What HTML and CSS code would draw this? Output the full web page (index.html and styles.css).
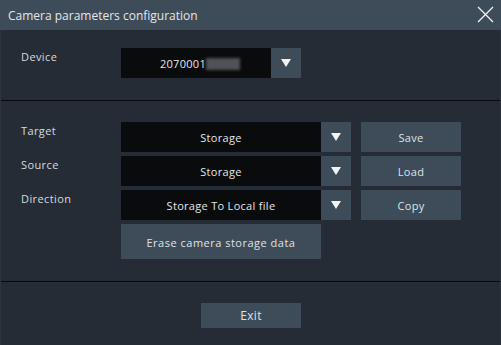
FILE: index.html
```html
<!DOCTYPE html>
<html>
<head>
<meta charset="utf-8">
<link rel="stylesheet" href="styles.css">
</head>
<body>
<div class="window">
  <div class="titlebar">
    <span class="title">Camera parameters configuration</span>
    <svg class="close" width="17" height="17" viewBox="0 0 17 17"><path d="M1 1 L16 16 M16 1 L1 16" stroke="#f2f4f6" stroke-width="1.3" fill="none"/></svg>
  </div>
  <div class="section top">
    <div class="row">
      <span class="label">Device</span>
      <div class="select device">
        <span class="value">2070001<span class="blur"></span></span>
        <span class="arrow"><svg width="10" height="8" viewBox="0 0 10 8"><path d="M0 0 H10 L5 8 Z" fill="#f3f3f3"/></svg></span>
      </div>
    </div>
  </div>
  <div class="sep"></div>
  <div class="section mid">
    <div class="row">
      <span class="label">Target</span>
      <div class="select">
        <span class="value">Storage</span>
        <span class="arrow"><svg width="10" height="8" viewBox="0 0 10 8"><path d="M0 0 H10 L5 8 Z" fill="#f3f3f3"/></svg></span>
      </div>
      <button class="btn side">Save</button>
    </div>
    <div class="row">
      <span class="label">Source</span>
      <div class="select">
        <span class="value">Storage</span>
        <span class="arrow"><svg width="10" height="8" viewBox="0 0 10 8"><path d="M0 0 H10 L5 8 Z" fill="#f3f3f3"/></svg></span>
      </div>
      <button class="btn side">Load</button>
    </div>
    <div class="row">
      <span class="label">Direction</span>
      <div class="select">
        <span class="value">Storage To Local file</span>
        <span class="arrow"><svg width="10" height="8" viewBox="0 0 10 8"><path d="M0 0 H10 L5 8 Z" fill="#f3f3f3"/></svg></span>
      </div>
      <button class="btn side">Copy</button>
    </div>
    <div class="row">
      <span class="label"></span>
      <button class="btn erase">Erase camera storage data</button>
    </div>
  </div>
  <div class="sep"></div>
  <div class="footer">
    <button class="btn exit">Exit</button>
  </div>
</div>
</body>
</html>
```

FILE: styles.css
```css
html, body {
  margin: 0;
  padding: 0;
  background: #252c36;
}
body {
  font-family: "Open Sans", "Liberation Sans", sans-serif;
  color: #dde1e5;
}
.window {
  width: 501px;
  height: 345px;
  display: flex;
  flex-direction: column;
  background: #252c36;
  box-sizing: border-box;
  border-left: 1px solid #2c333d;
  border-right: 1px solid #2c333d;
}
.titlebar {
  height: 30px;
  background: #3e4c59;
  display: flex;
  align-items: center;
  justify-content: space-between;
  padding: 0 7px 0 8px;
  margin: 0 -1px;
  flex-shrink: 0;
}
.title {
  font-size: 12px;
  color: #e3e7ea;
  letter-spacing: 0;
}
.close {
  display: block;
  margin-top: -1px;
}
.section.top {
  padding: 18px 0 22px 20px;
}
.section.mid {
  padding: 21px 0 22px 20px;
  display: flex;
  flex-direction: column;
  gap: 4px;
}
.sep {
  height: 1px;
  background: #07090b;
  flex-shrink: 0;
}
.row {
  display: flex;
  align-items: flex-start;
}
.label {
  width: 100px;
  flex-shrink: 0;
  font-size: 11px;
  line-height: 12px;
  padding-top: 3px;
  color: #d6dade;
  letter-spacing: 0.4px;
}
.select {
  display: flex;
  height: 30px;
  width: 230px;
}
.select.device {
  width: 180px;
}
.value {
  flex: 1;
  background: #0a0b0d;
  display: flex;
  align-items: center;
  justify-content: center;
  font-size: 11px;
  color: #e4e6e8;
  letter-spacing: 0.3px;
  padding-top: 1px;
  box-sizing: border-box;
}
.device .value {
  padding-left: 8px;
}
.blur {
  display: inline-block;
  width: 34px;
  height: 12px;
  background: #505256;
  filter: blur(1.5px);
}
.arrow {
  width: 30px;
  background: #3e4c59;
  display: flex;
  align-items: center;
  justify-content: center;
}
.arrow svg {
  display: block;
}
.btn {
  background: #3e4c59;
  border: none;
  margin: 0;
  padding: 0;
  color: #dfe3e6;
  font-family: "Open Sans", "Liberation Sans", sans-serif;
  font-size: 11px;
  letter-spacing: 0.3px;
}
.btn.side {
  width: 100px;
  height: 30px;
  margin-left: 10px;
}
.btn.erase {
  width: 200px;
  height: 35px;
  padding-top: 1px;
  letter-spacing: 0.5px;
}
.footer {
  display: flex;
  justify-content: center;
  padding-top: 21px;
}
.btn.exit {
  width: 100px;
  height: 25px;
  margin-left: 1px;
  font-size: 12px;
}
```
